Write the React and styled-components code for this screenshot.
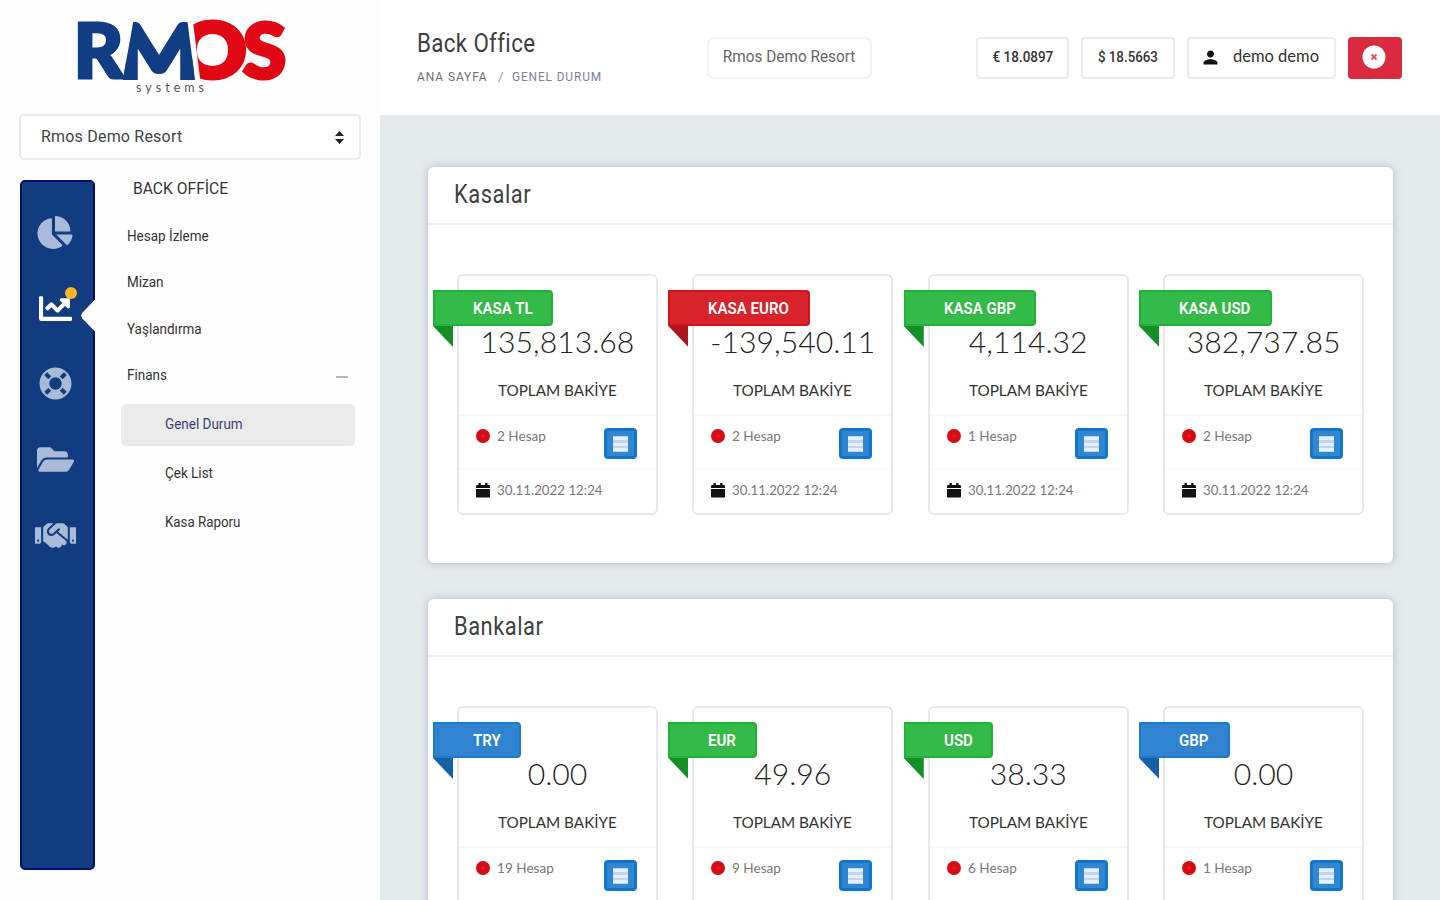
import React from "react";
import styled, { createGlobalStyle } from "styled-components";
import { FaChartPie, FaChartLine, FaLifeRing, FaFolderOpen, FaHandshake } from "react-icons/fa";
import { MdPerson } from "react-icons/md";

const Global = createGlobalStyle`
  * { box-sizing: border-box; }
  html, body { margin: 0; padding: 0; overflow: hidden; background: #fff; }
  body { font-family: Roboto, "Liberation Sans", sans-serif; color: #333; }
`;

const Page = styled.div`
  display: flex;
  width: 1440px;
  height: 900px;
  overflow: hidden;
`;

/* ---------- text ---------- */
const Text = styled.span`
  display: inline-block;
  white-space: nowrap;
  font-family: ${(p) => (p.$lato ? "Lato" : "Roboto")}, sans-serif;
  font-size: ${(p) => p.$size}px;
  font-weight: ${(p) => p.$weight || 400};
  line-height: 1.2;
  color: ${(p) => p.$color || "#333"};
  letter-spacing: ${(p) => p.$spacing || 0}px;
  transform: scaleX(${(p) => p.$narrow || 1});
  transform-origin: ${(p) => p.$origin || "left"} center;
`;

/* ---------- sidebar ---------- */
const Sidebar = styled.aside`
  flex: 0 0 380px;
  padding: 0 19px 0 19px;
  background: #fefefe;
`;

const LogoArea = styled.div`
  height: 114px;
  svg { display: block; }
`;

const Select = styled.div`
  display: flex;
  align-items: center;
  justify-content: space-between;
  width: 342px;
  height: 46px;
  padding: 0 15px 0 20px;
  border: 2px solid #e8ecec;
  border-radius: 5px;
  background: #fff;
  svg { display: block; }
`;

const SideBody = styled.div`
  display: flex;
  margin-top: 20px;
  padding-left: 1px;
`;

const Rail = styled.nav`
  display: flex;
  flex-direction: column;
  align-items: center;
  width: 75px;
  height: 690px;
  padding-top: 13px;
  border: 2px solid #040b73;
  border-radius: 5px;
  background: #113d80;
  position: relative;
`;

const RailItem = styled.div`
  position: relative;
  display: flex;
  align-items: center;
  justify-content: center;
  width: 100%;
  height: 75.6px;
  padding-right: 5px;
  color: ${(p) => (p.$active ? "#fff" : "#a9bbd8")};
  > svg { flex: none; width: ${(p) => p.$icon || 33}px; height: 33px; }
`;

const Dot = styled.i`
  position: absolute;
  top: 16px;
  left: 43px;
  width: 12px;
  height: 12px;
  border-radius: 50%;
  background: #fdb528;
`;

const Notch = styled.i`
  position: absolute;
  top: 29px;
  right: -2px;
  width: 14px;
  height: 32px;
  background: #fefefe;
  clip-path: polygon(100% 0, 100% 100%, 8% 58%, 0 50%, 8% 42%);
`;

const Menu = styled.div`
  width: 234px;
  margin-left: 26px;
`;

const MenuTitle = styled.div`
  display: flex;
  align-items: center;
  height: 33px;
  padding: 0 0 17px 12px;
`;

const MenuItem = styled.div`
  display: flex;
  align-items: center;
  justify-content: space-between;
  height: 46.4px;
  padding: 0 7px 0 6px;
`;

const Minus = styled.i`
  width: 12px;
  height: 2px;
  margin-top: 4px;
  background: #b5b8b8;
`;

const SubList = styled.div`
  display: flex;
  flex-direction: column;
  gap: 7px;
  margin-top: 5px;
`;

const SubItem = styled.div`
  display: flex;
  align-items: center;
  height: 42px;
  padding-left: 44px;
  border-radius: 5px;
  background: ${(p) => (p.$active ? "#ebebeb" : "transparent")};
`;

/* ---------- main ---------- */
const Main = styled.main`
  flex: 1;
  min-width: 0;
  background: #e5eaed;
`;

const Header = styled.header`
  display: flex;
  height: 115px;
  padding: 37px 38px 0 37px;
  background: #fff;
`;

const Heading = styled.div`
  display: flex;
  flex-direction: column;
  width: 290px;
  margin-top: -9px;
`;

const Crumbs = styled.div`
  display: flex;
  margin-top: 9px;
`;

const CrumbCell = styled.div`
  display: flex;
  width: ${(p) => p.$w}px;
`;

const HeaderBox = styled.div`
  display: flex;
  align-items: center;
  justify-content: center;
  gap: ${(p) => p.$gap || 0}px;
  width: ${(p) => p.$w}px;
  height: 42px;
  padding: 0 ${(p) => p.$end || 0}px 2px 0;
  border: 2px solid ${(p) => (p.$danger ? "#d92a40" : p.$soft ? "#f1f2f2" : "#eaeced")};
  border-radius: ${(p) => (p.$soft ? 7 : 4)}px;
  background: ${(p) => (p.$danger ? "#d92a40" : "#fff")};
`;

const Actions = styled.div`
  display: flex;
  gap: 12px;
  margin-left: auto;
`;

const Content = styled.div`
  display: flex;
  flex-direction: column;
  gap: 36.5px;
  padding: 52px 47px 0 48px;
`;

const Card = styled.section`
  height: 395.5px;
  border-radius: 6px;
  background: #fff;
  box-shadow: 0 0 9px rgba(70, 85, 95, 0.34);
`;

const CardHead = styled.div`
  display: flex;
  align-items: center;
  height: 58px;
  padding: 0 26px;
  border-bottom: 2px solid #eff0f1;
`;

const Grid = styled.div`
  display: grid;
  grid-template-columns: repeat(4, 1fr);
  gap: 34.5px;
  padding: 49px 29px 0 29px;
`;

const Box = styled.article`
  position: relative;
  display: flex;
  flex-direction: column;
  height: 241px;
  border: 2px solid #e7e8ea;
  border-radius: 6px;
  background: #fff;
`;

const tones = {
  green: ["#34ba49", "#1fb335", "#148f28"],
  red: ["#d8232a", "#d0141a", "#a9141a"],
  blue: ["#3083d0", "#1d7bcb", "#155fa6"],
};

const Ribbon = styled.div`
  position: absolute;
  top: 14px;
  left: -26px;
  display: flex;
  align-items: center;
  width: ${(p) => p.$w}px;
  height: 36px;
  padding-left: 38px;
  border: 2px solid ${(p) => tones[p.$tone][1]};
  border-radius: 0 4px 4px 0;
  background: ${(p) => tones[p.$tone][0]};
  &::after {
    content: "";
    position: absolute;
    top: 34px;
    left: -2px;
    width: 20px;
    height: 21px;
    background: ${(p) => tones[p.$tone][2]};
    clip-path: polygon(0 0, 100% 0, 100% 100%);
  }
`;

const Totals = styled.div`
  display: flex;
  flex-direction: column;
  align-items: center;
  height: 140px;
  padding-top: 47px;
  border-bottom: 2px solid #f5f6f6;
`;

const TotalLabel = styled.div`
  margin-top: 22px;
`;

const AccountRow = styled.div`
  display: flex;
  align-items: flex-start;
  height: 54px;
  padding: 12px 19px 0 17px;
  border-bottom: 2px solid #fafafa;
`;

const DateRow = styled.div`
  display: flex;
  align-items: center;
  gap: 7px;
  height: 41px;
  padding-left: 17px;
  svg { display: block; }
`;

const RedDot = styled.i`
  width: 14px;
  height: 14px;
  margin: 1px 7px 0 0;
  border: 5px solid #d80a12;
  border-radius: 50%;
  background: #de2026;
`;

const ListButton = styled.div`
  display: flex;
  align-items: center;
  justify-content: center;
  width: 33px;
  height: 31px;
  margin-left: auto;
  border: 3px solid #1176c8;
  border-radius: 4px;
  background: #2f86d2;
  svg { display: block; }
`;

const Letter = styled.text`
  font-family: Lato, sans-serif;
  font-weight: ${(p) => p.$weight || 900};
  font-size: ${(p) => p.$size || 74}px;
  fill: ${(p) => p.$tint};
  stroke: ${(p) => p.$tint};
  stroke-width: ${(p) => p.$stroke}px;
`;

function Logo() {
  return (
    <svg width="340" height="114" viewBox="19 0 340 114">
      <clipPath id="m-shape">
        <polygon points="134,18 187,18 195.5,84 122,84" />
      </clipPath>
      <Letter $tint="#e00613" $weight={700} $stroke={6} x="179" y="76.5" textLength="67" lengthAdjust="spacingAndGlyphs">O</Letter>
      <polygon points="172,14 192,14 201,86 172,86" fill="#fefefe" />
      <Letter $tint="#113d85" $stroke={3} $size={76} x="73.5" y="78" textLength="50" lengthAdjust="spacingAndGlyphs">R</Letter>
      <g clipPath="url(#m-shape)">
        <Letter $tint="#113d85" $stroke={4} x="117" y="77.5" textLength="84" lengthAdjust="spacingAndGlyphs">M</Letter>
      </g>
      <Letter $tint="#e00613" $stroke={4} $size={76} x="243" y="77.5" textLength="43" lengthAdjust="spacingAndGlyphs">S</Letter>
      <text x="136" y="92" fontFamily="Lato" fontSize="12.5" fill="#555" textLength="68">systems</text>
    </svg>
  );
}

function Caret() {
  return (
    <svg width="9" height="13" viewBox="0 0 9 13">
      <path d="M4.5 0 9 5H0zM4.5 13 0 8h9z" fill="#222" />
    </svg>
  );
}

function Calendar() {
  return (
    <svg width="14" height="15" viewBox="0 0 14 15">
      <path d="M0 3.2Q0 2 1.2 2H2.5V0h2.3v2h4.4V0h2.3v2h1.3Q14 2 14 3.2V5H0zM0 6h14v7.4Q14 14.6 12.8 14.6H1.2Q0 14.6 0 13.4z" fill="#111" />
    </svg>
  );
}

function ListGlyph() {
  return (
    <svg width="15" height="16" viewBox="0 0 15 16">
      <rect width="15" height="16" fill="#bfd5f2" />
      <path d="M0 1h15v3H0zM0 7h15v3H0zM0 12h15v3H0z" fill="#e6effb" />
    </svg>
  );
}

const kasalar = [
  { tag: "KASA TL", w: 120, tone: "green", total: "135,813.68", count: 2 },
  { tag: "KASA EURO", w: 142, tone: "red", total: "-139,540.11", count: 2 },
  { tag: "KASA GBP", w: 132, tone: "green", total: "4,114.32", count: 1 },
  { tag: "KASA USD", w: 133, tone: "green", total: "382,737.85", count: 2 },
];

const bankalar = [
  { tag: "TRY", w: 88, tone: "blue", total: "0.00", count: 19 },
  { tag: "EUR", w: 89, tone: "green", total: "49.96", count: 9 },
  { tag: "USD", w: 89, tone: "green", total: "38.33", count: 6 },
  { tag: "GBP", w: 91, tone: "blue", total: "0.00", count: 1 },
];

function AccountBox({ item }) {
  return (
    <Box>
      <Totals>
        <Text $lato $size={30.2} $weight={300} $color="#222" $origin="center">{item.total}</Text>
        <TotalLabel>
          <Text $lato $size={15.5} $narrow={0.985} $color="#333" $origin="center">TOPLAM BAKİYE</Text>
        </TotalLabel>
      </Totals>
      <AccountRow>
        <RedDot />
        <Text $lato $size={14} $narrow={0.97} $color="#777">{item.count} Hesap</Text>
        <ListButton><ListGlyph /></ListButton>
      </AccountRow>
      <DateRow>
        <Calendar />
        <Text $lato $size={14} $narrow={0.95} $color="#777">30.11.2022 12:24</Text>
      </DateRow>
      <Ribbon $w={item.w} $tone={item.tone}>
        <Text $size={17} $weight={600} $color="#fff" $narrow={0.885}>{item.tag}</Text>
      </Ribbon>
    </Box>
  );
}

function Panel({ title, items }) {
  return (
    <Card>
      <CardHead>
        <Text $size={25} $spacing={0.6} $narrow={0.875} $color="#3c4043">{title}</Text>
      </CardHead>
      <Grid>
        {items.map((item) => <AccountBox key={item.tag} item={item} />)}
      </Grid>
    </Card>
  );
}

export default function App() {
  return (
    <Page>
      <Global />
      <Sidebar>
        <LogoArea><Logo /></LogoArea>
        <Select>
          <Text $size={16} $spacing={0.2} $color="#444">Rmos Demo Resort</Text>
          <Caret />
        </Select>
        <SideBody>
          <Rail>
            <RailItem $icon={36}><FaChartPie /></RailItem>
            <RailItem $active><FaChartLine /><Dot /><Notch /></RailItem>
            <RailItem><FaLifeRing /></RailItem>
            <RailItem $icon={37}><FaFolderOpen /></RailItem>
            <RailItem $icon={41}><FaHandshake /></RailItem>
          </Rail>
          <Menu>
            <MenuTitle><Text $size={17} $narrow={0.92}>BACK OFFİCE</Text></MenuTitle>
            <MenuItem><Text $size={15.5} $narrow={0.87}>Hesap İzleme</Text></MenuItem>
            <MenuItem><Text $size={15.5} $narrow={0.87}>Mizan</Text></MenuItem>
            <MenuItem><Text $size={15.5} $narrow={0.87}>Yaşlandırma</Text></MenuItem>
            <MenuItem><Text $size={15.5} $narrow={0.87}>Finans</Text><Minus /></MenuItem>
            <SubList>
              <SubItem $active><Text $size={15.5} $narrow={0.87} $color="#3c4170">Genel Durum</Text></SubItem>
              <SubItem><Text $size={15.5} $narrow={0.87}>Çek List</Text></SubItem>
              <SubItem><Text $size={15.5} $narrow={0.86}>Kasa Raporu</Text></SubItem>
            </SubList>
          </Menu>
        </SideBody>
      </Sidebar>
      <Main>
        <Header>
          <Heading>
            <Text $size={26} $spacing={0.4} $narrow={0.86} $color="#3c4043">Back Office</Text>
            <Crumbs>
              <CrumbCell $w={81}><Text $size={13.5} $spacing={1.1} $narrow={0.88} $color="#6b6f73">ANA SAYFA</Text></CrumbCell>
              <CrumbCell $w={14}><Text $size={13.5} $color="#999">/</Text></CrumbCell>
              <Text $size={13.5} $spacing={1} $narrow={0.88} $color="#7c8199">GENEL DURUM</Text>
            </Crumbs>
          </Heading>
          <HeaderBox $w={165} $soft>
            <Text $size={16} $narrow={0.96} $origin="center" $color="#666">Rmos Demo Resort</Text>
          </HeaderBox>
          <Actions>
            <HeaderBox $w={93}><Text $size={15.5} $weight={500} $narrow={0.87} $origin="center">€ 18.0897</Text></HeaderBox>
            <HeaderBox $w={94}><Text $size={15.5} $weight={500} $narrow={0.86} $origin="center">$ 18.5663</Text></HeaderBox>
            <HeaderBox $w={149} $gap={12} $end={4}>
              <MdPerson size={21} color="#111" />
              <Text $lato $size={16.5}>demo demo</Text>
            </HeaderBox>
            <HeaderBox $w={54} $end={2} $danger>
              <svg width="24" height="24" viewBox="0 0 24 24">
                <circle cx="12" cy="12" r="11.5" fill="#fff" />
                <path d="M9.5 9.5l5 5M14.5 9.5l-5 5" stroke="#e0505f" strokeWidth="1.8" />
              </svg>
            </HeaderBox>
          </Actions>
        </Header>
        <Content>
          <Panel title="Kasalar" items={kasalar} />
          <Panel title="Bankalar" items={bankalar} />
        </Content>
      </Main>
    </Page>
  );
}
